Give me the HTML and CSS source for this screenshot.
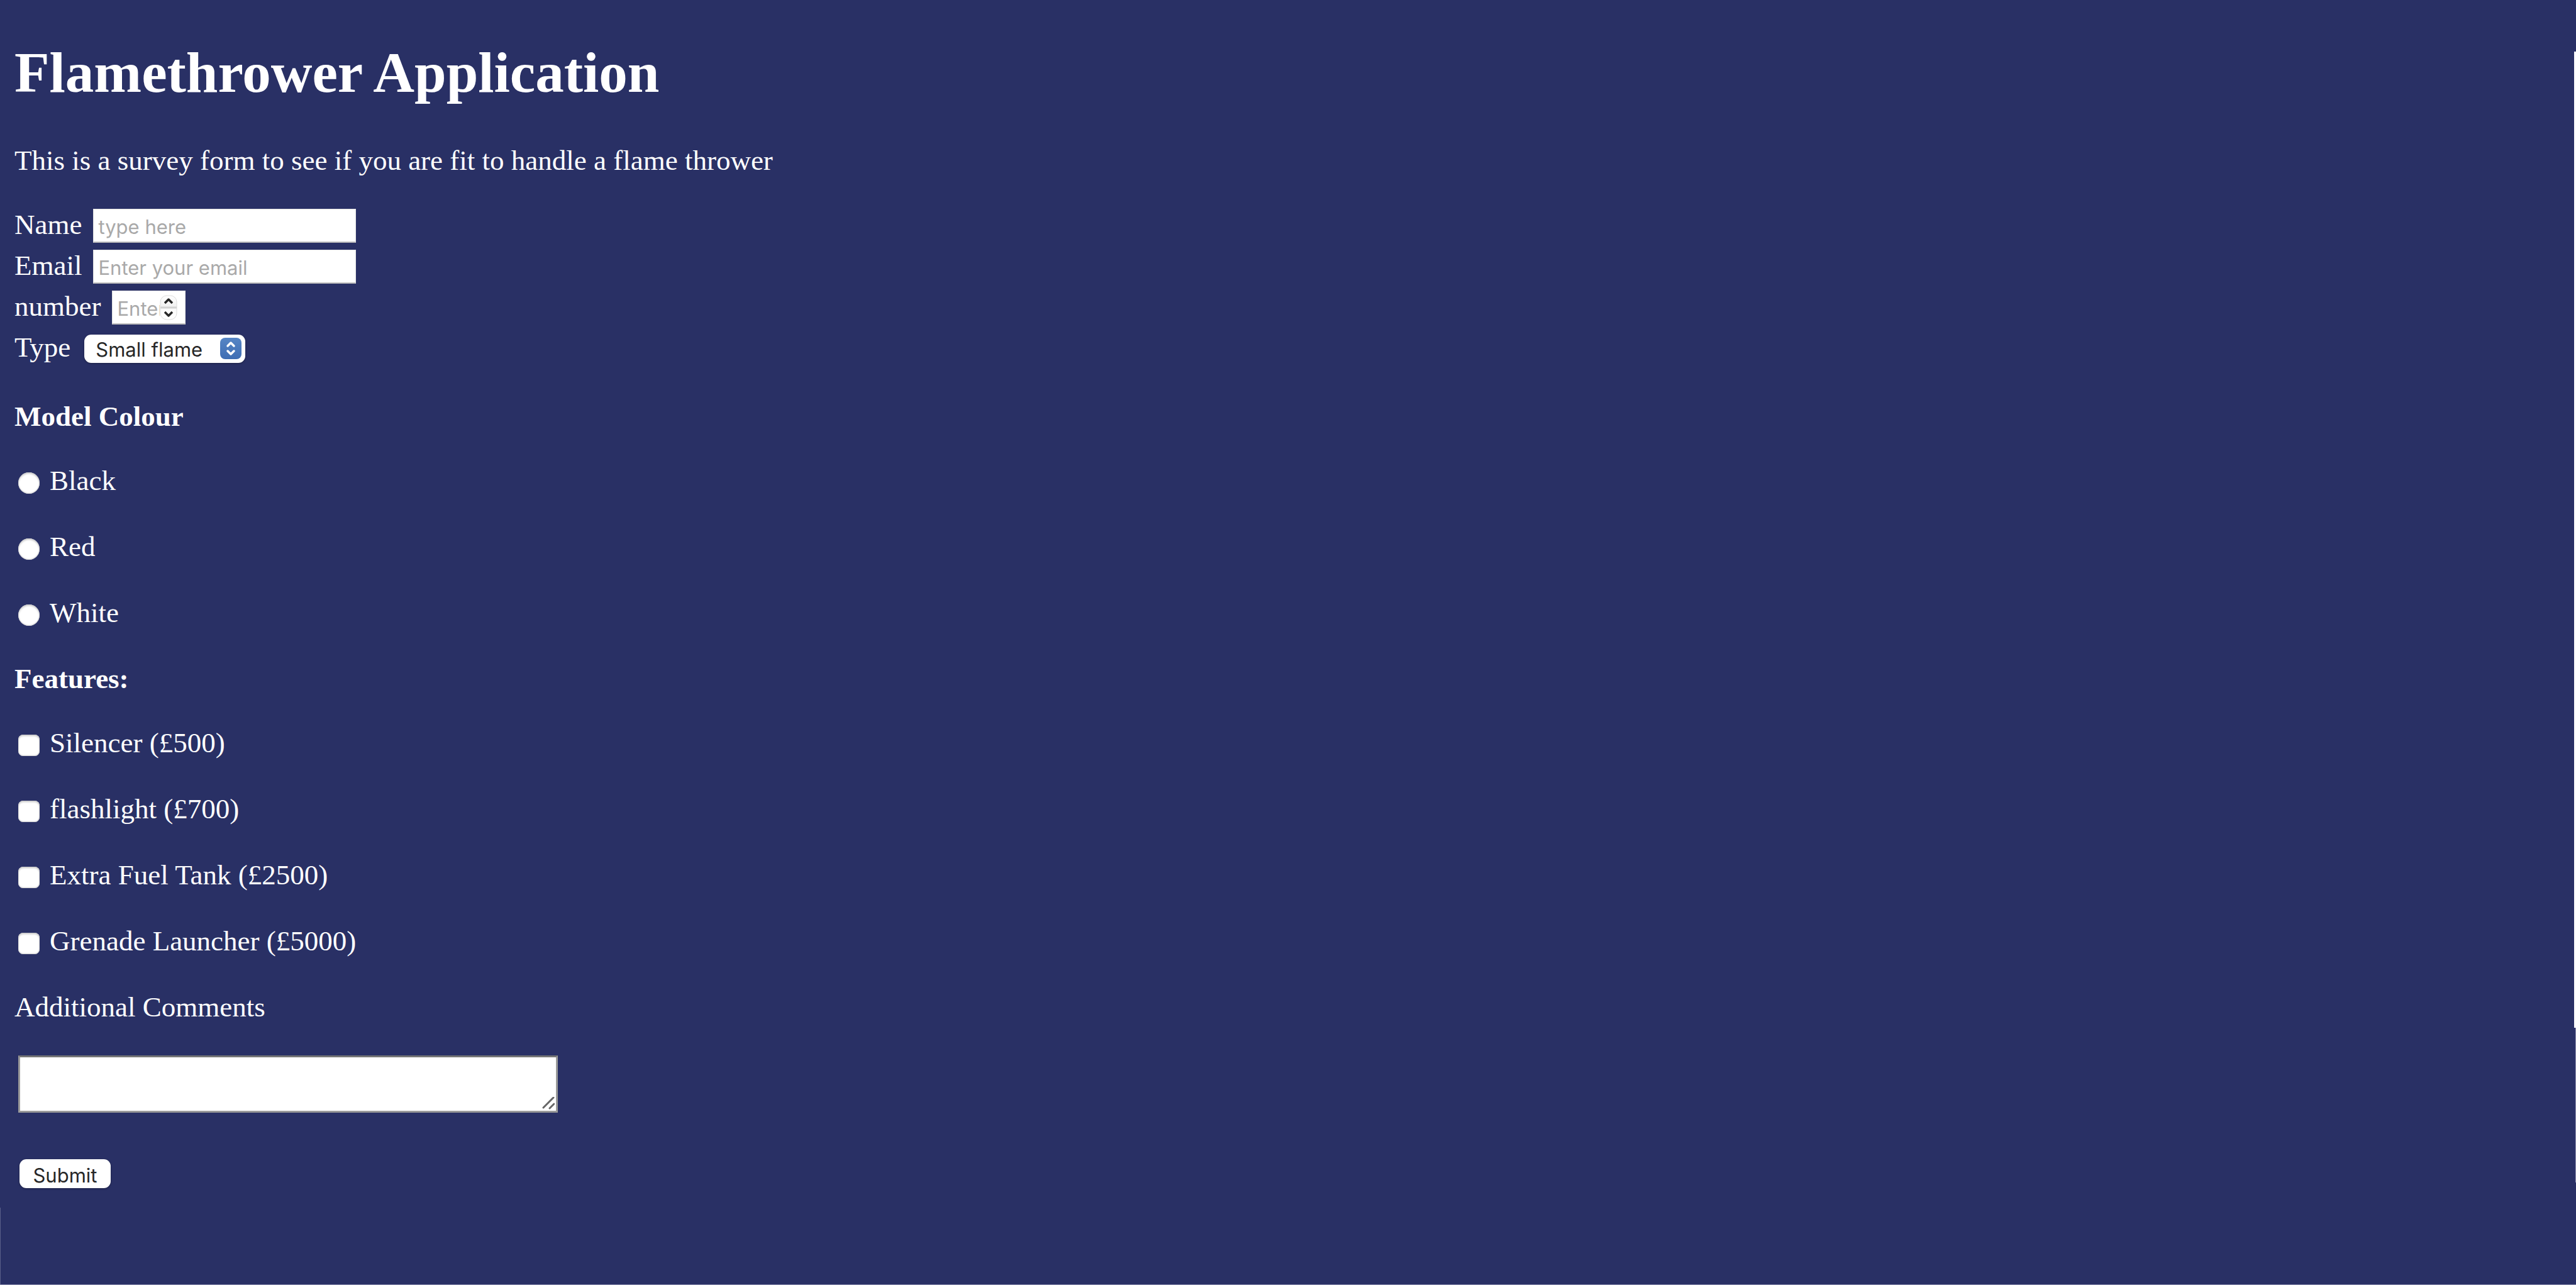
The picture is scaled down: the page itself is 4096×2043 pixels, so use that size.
FILE: index.html
```html
<!DOCTYPE html>
<html lang="en">
<head>
<meta charset="utf-8">
<title>Flamethrower Application</title>
<link rel="stylesheet" href="styles.css">
</head>
<body>
<main class="page">
  <h1 class="title">Flamethrower Application</h1>
  <p class="intro">This is a survey form to see if you are fit to handle a flame thrower</p>
  <form class="form">
    <div class="fields">
      <div class="field">
        <label for="name">Name</label>
        <input class="text-input" id="name" type="text" placeholder="type here">
      </div>
      <div class="field">
        <label for="email">Email</label>
        <input class="text-input" id="email" type="email" placeholder="Enter your email">
      </div>
      <div class="field">
        <label for="number">number</label>
        <span class="number-box">
          <input class="text-input number-input" id="number" type="number" placeholder="Enter number">
          <svg class="stepper" viewBox="0 0 28 40" aria-hidden="true">
            <defs>
              <linearGradient id="step" x1="0" y1="0" x2="0" y2="1">
                <stop offset="0" stop-color="#fff"/><stop offset="0.45" stop-color="#f1f1f1"/>
                <stop offset="0.55" stop-color="#fafafa"/><stop offset="1" stop-color="#fff"/>
              </linearGradient>
            </defs>
            <rect x="1" y="1" width="26" height="38" rx="10" fill="url(#step)" stroke="#dcdcdc" stroke-width="1"/>
            <path d="M1 20H27" stroke="#d2d2d2" stroke-width="3"/>
            <path d="M8 13L14 7L20 13M8 27L14 33L20 27" fill="none" stroke="#262626" stroke-width="3.5" stroke-linejoin="round"/>
          </svg>
        </span>
      </div>
      <div class="field">
        <label for="type">Type</label>
        <span class="select-box">
          <select class="select" id="type">
            <option>Small flame</option>
            <option>Medium flame</option>
            <option>Large flame</option>
          </select>
          <svg class="select-arrows" viewBox="0 0 34 34" aria-hidden="true">
            <defs>
              <linearGradient id="blue" x1="0" y1="0" x2="0" y2="1">
                <stop offset="0" stop-color="#5685c4"/><stop offset="1" stop-color="#3e6db3"/>
              </linearGradient>
            </defs>
            <rect width="34" height="34" rx="8" fill="url(#blue)"/>
            <path d="M12 13L17 8L22 13M12 21L17 26L22 21" fill="none" stroke="#fff" stroke-width="3.5" stroke-linecap="round" stroke-linejoin="round"/>
          </svg>
        </span>
      </div>
    </div>

    <h2 class="heading" id="colour-heading">Model Colour</h2>
    <div class="choices" role="radiogroup" aria-labelledby="colour-heading">
      <div class="choice"><input class="radio" type="radio" name="colour" id="black"><label for="black">Black</label></div>
      <div class="choice"><input class="radio" type="radio" name="colour" id="red"><label for="red">Red</label></div>
      <div class="choice"><input class="radio" type="radio" name="colour" id="white"><label for="white">White</label></div>
    </div>

    <h2 class="heading" id="features-heading">Features:</h2>
    <div class="choices" role="group" aria-labelledby="features-heading">
      <div class="choice"><input class="checkbox" type="checkbox" id="silencer"><label for="silencer">Silencer (£500)</label></div>
      <div class="choice"><input class="checkbox" type="checkbox" id="flashlight"><label for="flashlight">flashlight (£700)</label></div>
      <div class="choice"><input class="checkbox" type="checkbox" id="tank"><label for="tank">Extra Fuel Tank (£2500)</label></div>
      <div class="choice"><input class="checkbox" type="checkbox" id="launcher"><label for="launcher">Grenade Launcher (£5000)</label></div>
    </div>

    <label class="comments-label" for="comments">Additional Comments</label>
    <div class="comments-box">
      <textarea class="comments" id="comments"></textarea>
      <svg class="grip" viewBox="0 0 20 20" aria-hidden="true">
        <path d="M2 17L18 1M12 18L19 11" stroke="#666" stroke-width="3" stroke-linecap="round"/>
      </svg>
    </div>
    <button class="submit" type="submit">Submit</button>
  </form>
</main>
<div class="scroll-thumb" aria-hidden="true"></div>
</body>
</html>
```
FILE: styles.css
```css
* {
  box-sizing: border-box;
}

/* Hairlines run along the lower left, bottom and lower right window edges */
body {
  margin: 0;
  min-height: 100vh;
  background:
    linear-gradient(#8d90b2, #8d90b2) left bottom / 100% 1px no-repeat,
    linear-gradient(#5a5f89, #5a5f89) left bottom / 1px 6% no-repeat,
    linear-gradient(transparent 80%, #9a9bb8 80%, #9a9bb8 92%, transparent 92%) right top / 1px 100% no-repeat,
    #293065;
  color: #fff;
  font-family: "Liberation Serif", "Times New Roman", serif;
  font-size: 45px;
  line-height: 50px;
}

.page {
  padding: 64px 23px;
}

.title {
  margin: 0 0 62px;
  font-size: 91px;
  line-height: 104px;
}

.intro {
  margin: 0 0 52px;
}

.fields {
  display: flex;
  flex-direction: column;
  gap: 11px;
  margin-bottom: 56px;
}

.field {
  display: flex;
  align-items: flex-start;
  gap: 18px;
  height: 54px;
}

.text-input {
  width: 418px;
  height: 54px;
  margin: 0;
  padding: 4px 7px 0;
  border: 1px solid #e4e4e4;
  border-bottom: 2px solid #bdbdbd;
  border-radius: 0;
  background: #fff;
  color: #262626;
  font-family: Inter, sans-serif;
  font-size: 31px;
}

.text-input::placeholder {
  color: #a9a9a9;
  opacity: 1;
}

.number-box,
.select-box,
.comments-box {
  position: relative;
  display: block;
}

.number-box {
  height: 54px;
}

.number-input {
  display: block;
  width: 117px;
  padding-right: 40px;
  appearance: textfield;
}

.number-input::-webkit-inner-spin-button {
  display: none;
}

.stepper {
  position: absolute;
  top: 7px;
  right: 13px;
  width: 28px;
  height: 40px;
}

.select-box {
  margin: 5px 0 0 4px;
}

.select {
  display: block;
  width: 256px;
  height: 45px;
  margin: 0;
  padding: 1px 0 0 18px;
  border: 0;
  border-radius: 11px;
  background: #fff;
  color: #262626;
  box-shadow: 0 1px 3px rgba(0, 0, 0, 0.35);
  font-family: Inter, sans-serif;
  font-size: 31px;
  appearance: none;
}

.select-arrows {
  position: absolute;
  top: 5px;
  right: 6px;
  width: 34px;
  height: 34px;
  pointer-events: none;
}

.heading {
  margin: 0 0 52px;
  font-size: 45px;
  line-height: 50px;
}

.choices {
  display: flex;
  flex-direction: column;
  gap: 55px;
  margin-bottom: 55px;
}

.choice {
  display: flex;
  align-items: flex-start;
  gap: 16px;
  padding-left: 6px;
}

.radio,
.checkbox {
  flex: none;
  width: 34px;
  height: 34px;
  margin: 12px 0 0;
  border-radius: 8px;
  background: #fff;
  box-shadow: inset 0 2px 3px #c4c4c4, inset 0 -1px 2px #cfcfcf;
  appearance: none;
}

.radio {
  border-radius: 50%;
}

.radio:checked,
.checkbox:checked {
  background: #3e6db3;
}

.comments-label {
  display: block;
  margin-bottom: 52px;
}

.comments-box {
  width: 858px;
  margin: 0 0 74px 6px;
}

.comments {
  display: block;
  width: 100%;
  height: 91px;
  margin: 0;
  padding: 6px;
  border: 3px solid #9a9a9a;
  border-top-color: #767676;
  background: #fff;
  color: #262626;
  font-family: Inter, sans-serif;
  font-size: 31px;
  resize: none;
}

.grip {
  position: absolute;
  right: 5px;
  bottom: 5px;
  width: 20px;
  height: 20px;
}

.submit {
  display: block;
  width: 145px;
  height: 46px;
  margin-left: 8px;
  padding: 4px 0 0;
  border: 0;
  border-radius: 11px;
  background: #fff;
  color: #262626;
  box-shadow: 0 1px 3px rgba(0, 0, 0, 0.35);
  font-family: Inter, sans-serif;
  font-size: 31px;
}

/* Slim scroll thumb along the right edge of the window */
.scroll-thumb {
  position: fixed;
  top: 4vh;
  right: 0;
  width: 3px;
  height: 76vh;
  background: #fff;
}
```
